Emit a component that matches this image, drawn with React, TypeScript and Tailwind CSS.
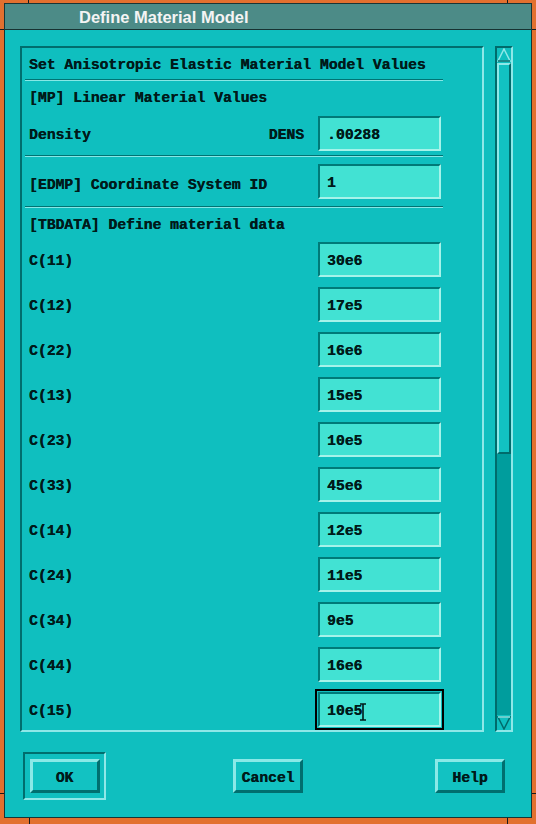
import React from 'react';

const mono =
  "inline-block translate-y-[2px] font-['Liberation_Mono',monospace] font-bold text-[14.7px] text-[#001a1a] [text-shadow:0.35px_0_0_#001a1a]";

const rows: [string, string][] = [
  ['C(11)', '30e6'],
  ['C(12)', '17e5'],
  ['C(22)', '16e6'],
  ['C(13)', '15e5'],
  ['C(23)', '10e5'],
  ['C(33)', '45e6'],
  ['C(14)', '12e5'],
  ['C(24)', '11e5'],
  ['C(34)', '9e5'],
  ['C(44)', '16e6'],
];

const Separator = () => (
  <div className="w-[418px]">
    <div className="h-px bg-[#007373]" />
    <div className="h-px bg-[#86e8e6]" />
  </div>
);

const Caret = () => (
  <svg width="8" height="18" viewBox="0 0 8 18" className="-ml-[3px] translate-y-[2px]">
    <path d="M1 1h6M4 1v16M1 17h6" stroke="#001a1a" strokeWidth="1.6" fill="none" />
  </svg>
);

const Field = ({ value, focused }: { value: string; focused?: boolean }) => {
  const box = (
    <div className="w-[123px] h-[35px] bg-[#42e2d3] border-2 border-t-[#007a78] border-l-[#007a78] border-b-[#a6f3ea] border-r-[#a6f3ea] flex items-center pl-[7px]">
      <span className={mono}>{value}</span>
      {focused && <Caret />}
    </div>
  );
  if (!focused) return box;
  return <div className="outline-2 outline-black outline-offset-[1px]">{box}</div>;
};

const Button = ({ label }: { label: string }) => (
  <div className="w-[70px] h-[34px] bg-[#12c2c2] border-[3px] border-t-[#8ae9e7] border-l-[#8ae9e7] border-b-[#006f6f] border-r-[#006f6f] flex items-center justify-center">
    <span className={mono}>{label}</span>
  </div>
);

const Tick = ({ className }: { className: string }) => (
  <div className={`absolute bg-[#1a1a1a] ${className}`} />
);

export default function App() {
  return (
    <div className="relative w-[536px] h-[824px] bg-[#e2702f] pt-[3px] pl-[4px] pr-[4px] pb-[6px]">
      <Tick className="left-[28px] top-0 w-px h-[3px]" />
      <Tick className="left-[507px] top-0 w-px h-[3px]" />
      <Tick className="left-0 top-[29px] w-[4px] h-px" />
      <Tick className="left-0 top-[793px] w-[4px] h-px" />
      <Tick className="left-[29px] bottom-0 w-px h-[6px]" />
      <Tick className="left-[507px] bottom-0 w-px h-[6px]" />
      <Tick className="right-0 top-[29px] w-[4px] h-px" />
      <Tick className="right-0 top-[793px] w-[4px] h-px" />

      <div className="h-full flex flex-col border border-[#183535]">
        <div className="h-[26px] bg-[#4c8b87] border-b border-[#173232] flex items-center pl-[74px] pt-[2px]">
          <span className="font-['Liberation_Sans',Arial,sans-serif] font-bold text-[16.5px] text-[#f4f4f4]">
            Define Material Model
          </span>
        </div>

        <div className="flex-1 bg-[#0fbfbf] pl-[15px] pt-[16px] flex flex-col">
          <div className="flex">
            <div className="w-[464px] h-[686px] overflow-hidden border-2 border-t-[#006e6e] border-l-[#006e6e] border-b-[#8ee8e8] border-r-[#8ee8e8]">
              <div className="ml-[3px] flex flex-col">
                <div className="h-[31px] flex items-center pl-[4px]">
                  <span className={mono}>Set Anisotropic Elastic Material Model Values</span>
                </div>
                <Separator />
                <div className="h-[30px] flex items-center pl-[4px]">
                  <span className={mono}>[MP] Linear Material Values</span>
                </div>
                <div className="h-[44px] flex items-center">
                  <div className="w-[293px] flex justify-between pl-[4px] pr-[14px]">
                    <span className={mono}>Density</span>
                    <span className={mono}>DENS</span>
                  </div>
                  <Field value=".00288" />
                </div>
                <Separator />
                <div className="h-[49px] flex items-center">
                  <div className="w-[293px] pl-[4px]">
                    <span className={mono}>[EDMP] Coordinate System ID</span>
                  </div>
                  <Field value="1" />
                </div>
                <Separator />
                <div className="h-[31px] flex items-center pl-[4px]">
                  <span className={mono}>[TBDATA] Define material data</span>
                </div>
                {rows.map(([label, value]) => (
                  <div key={label} className="h-[45px] flex items-start pt-[3px]">
                    <div className="w-[293px] h-[35px] pl-[4px] flex items-center">
                      <span className={mono}>{label}</span>
                    </div>
                    <Field value={value} />
                  </div>
                ))}
                <div className="h-[45px] flex items-start pt-[3px]">
                  <div className="w-[293px] h-[35px] pl-[4px] flex items-center">
                    <span className={mono}>C(15)</span>
                  </div>
                  <Field value="10e5" focused />
                </div>
              </div>
            </div>

            <div className="ml-[11px] w-[18px] h-[686px] border-2 border-t-[#006b6b] border-l-[#006b6b] border-b-[#8ee8e8] border-r-[#8ee8e8] bg-[#009d9d] flex flex-col">
              <svg width="14" height="15" viewBox="0 0 14 15" className="bg-[#0fbfbf]">
                <polygon points="7,1 13,13 1,13" fill="#0fbfbf" stroke="#8ee8e8" strokeWidth="1.5" />
                <line x1="1" y1="13" x2="13" y2="13" stroke="#006b6b" strokeWidth="1.5" />
              </svg>
              <div className="h-[391px] bg-[#12c2c2] border-2 border-t-[#8ee8e8] border-l-[#8ee8e8] border-b-[#006b6b] border-r-[#006b6b]" />
              <div className="flex-1" />
              <svg width="14" height="15" viewBox="0 0 14 15" className="bg-[#0fbfbf]">
                <polygon points="1,2 13,2 7,14" fill="#0fbfbf" stroke="#006b6b" strokeWidth="1.5" />
                <line x1="1" y1="2" x2="13" y2="2" stroke="#8ee8e8" strokeWidth="1.5" />
              </svg>
            </div>
          </div>

          <div className="flex items-center mt-[20px]">
            <div className="ml-[3px] w-[83px] h-[48px] border-2 border-t-[#006e6e] border-l-[#006e6e] border-b-[#8ee8e8] border-r-[#8ee8e8] flex items-center justify-center">
              <Button label="OK" />
            </div>
            <div className="ml-[127px]">
              <Button label="Cancel" />
            </div>
            <div className="ml-[132px]">
              <Button label="Help" />
            </div>
          </div>
        </div>
      </div>
    </div>
  );
}
